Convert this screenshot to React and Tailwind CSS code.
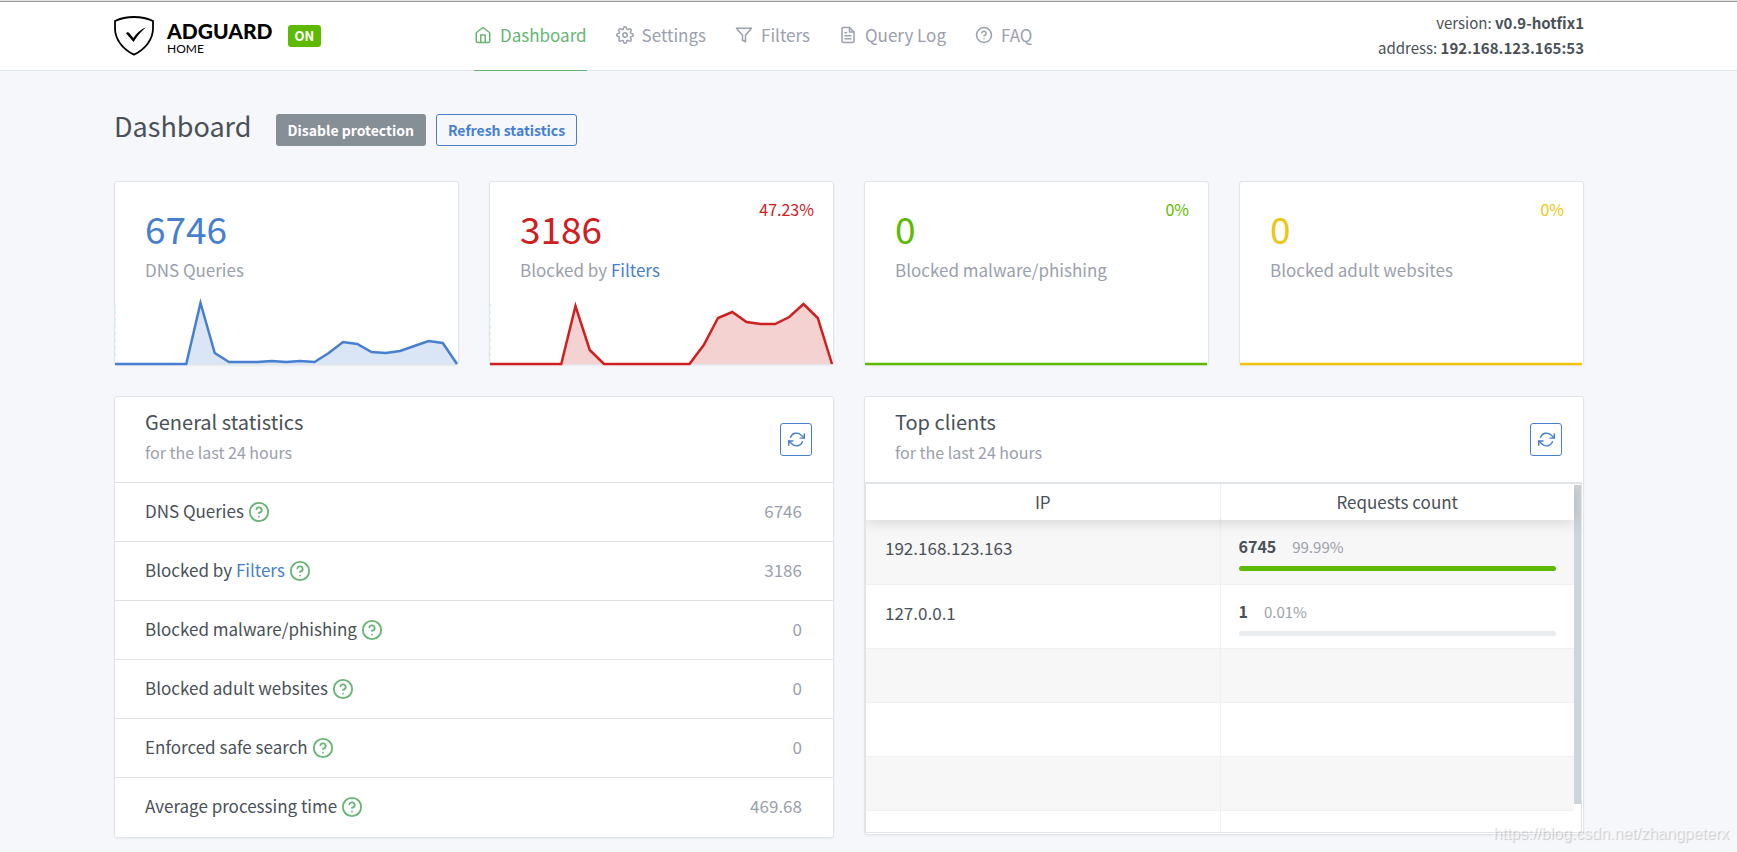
import { FiFileText, FiFilter, FiHelpCircle, FiHome, FiRefreshCw, FiSettings } from 'react-icons/fi';

const NAV_ITEMS = [
  { label: 'Dashboard', icon: FiHome, active: true },
  { label: 'Settings', icon: FiSettings },
  { label: 'Filters', icon: FiFilter },
  { label: 'Query Log', icon: FiFileText },
  { label: 'FAQ', icon: FiHelpCircle },
];

const FLAT = Array(25).fill(0);

const CARDS = [
  {
    value: 6746,
    label: 'DNS Queries',
    text: 'text-[#467fcf]',
    color: '#467fcf',
    guide: true,
    data: [0, 0, 0, 0, 0, 0, 61, 11, 2, 2, 2, 3, 2, 3, 2, 11, 22, 20, 12, 11, 13, 18, 23, 21, 0],
  },
  {
    value: 3186,
    label: 'Blocked by',
    link: 'Filters',
    percent: '47.23%',
    text: 'text-[#cd201f]',
    color: '#cd201f',
    guide: true,
    data: [0, 0, 0, 0, 0, 0, 58, 14, 0, 0, 0, 0, 0, 0, 0, 19, 46, 52, 42, 40, 40, 47, 60, 46, 0],
  },
  {
    value: 0,
    label: 'Blocked malware/phishing',
    percent: '0%',
    text: 'text-[#5eba00]',
    color: '#5eba00',
    data: FLAT,
  },
  {
    value: 0,
    label: 'Blocked adult websites',
    percent: '0%',
    text: 'text-[#f1c40f]',
    color: '#f1c40f',
    data: FLAT,
  },
];

const STATS = [
  { label: 'DNS Queries', value: '6746' },
  { label: 'Blocked by', link: 'Filters', value: '3186' },
  { label: 'Blocked malware/phishing', value: '0' },
  { label: 'Blocked adult websites', value: '0' },
  { label: 'Enforced safe search', value: '0' },
  { label: 'Average processing time', value: '469.68' },
];

const CLIENTS = [
  { ip: '192.168.123.163', count: 6745, percent: 99.99 },
  { ip: '127.0.0.1', count: 1, percent: 0.01 },
];

function Logo() {
  return (
    <a href="#" className="flex items-center gap-[13px] text-black">
      <svg viewBox="0 0 40 40" className="h-10 w-10" fill="none" stroke="currentColor">
        <path
          d="M20 1C13.600 1 6.600 2.300 1 5v7.500C1 22.500 8 33 20 38.600 32 33 39 22.500 39 12.500V5C33.400 2.300 26.400 1 20 1z"
          strokeWidth="1.800"
        />
        <path
          d="M12 17.200c1.200-1.400 2.600-1 3.600.2l3.700 4.600C22.600 17 27 13 32 11.200c-4.600 4-9.300 9.300-12.500 14.800z"
          fill="currentColor"
          stroke="none"
        />
      </svg>
      <span className="flex flex-col pt-1 font-[Lato,sans-serif]">
        <span className="text-[21px] leading-[22px] font-black">ADGUARD</span>
        <span className="text-xs leading-[14px]">HOME</span>
      </span>
    </a>
  );
}

function Header() {
  return (
    <header className="flex h-[70px] items-stretch border-t border-b border-t-[#999] border-b-[#dfe3ea] bg-white pr-[153px] pl-[114px]">
      <div className="flex w-[360px] items-center gap-[15px]">
        <Logo />
        <span className="rounded-[3px] bg-[#5eba00] px-[7px] text-[13px] leading-[22px] font-bold text-white">ON</span>
      </div>
      <nav className="-mb-px flex gap-[29px]">
        {NAV_ITEMS.map(({ label, icon: Icon, active }) => (
          <a
            key={label}
            href="#"
            className={`flex items-center gap-2 border-b pb-[2px] ${
              active ? 'border-[#66b574] text-[#66b574]' : 'border-transparent text-[#9aa0ac]'
            }`}
          >
            <Icon size={18} />
            {label}
          </a>
        ))}
      </nav>
      <div className="ml-auto pt-2 text-right text-[15px] leading-[25px]">
        <p>
          version: <b>v0.9-hotfix1</b>
        </p>
        <p>
          address: <b>192.168.123.165:53</b>
        </p>
      </div>
    </header>
  );
}

function Chart({ data, color, guide }) {
  const points = data.map((v, i) => `${i},${66 - v}`).join(' ');
  return (
    <div className="mt-4 pr-px">
      <svg viewBox="0 0 24 66" preserveAspectRatio="none" className="h-[66px] w-full overflow-visible">
        {guide && (
          <line
            x1="0.035"
            x2="0.035"
            y1="6"
            y2="60"
            stroke="#c8f8f8"
            strokeDasharray="3 4"
            vectorEffect="non-scaling-stroke"
          />
        )}
        <polygon points={`0,66 ${points} 24,66`} fill={color} fillOpacity="0.2" />
        <polyline
          points={points}
          fill="none"
          stroke={color}
          strokeWidth="2.500"
          strokeMiterlimit="10"
          vectorEffect="non-scaling-stroke"
        />
      </svg>
    </div>
  );
}

function CounterCard({ card }) {
  return (
    <section className="rounded-[3px] border border-[#e0e5ec] bg-white shadow-xs">
      <div className="flex items-start justify-between pt-[15px] pr-[19px] pl-[30px]">
        <div>
          <p className={`mt-2 text-[37px] leading-[46px] ${card.text}`}>{card.value}</p>
          <p className="mt-[7px] leading-6 text-[#9aa0ac]">
            {card.label}
            {card.link && (
              <a href="#" className="text-[#467fcf]">
                {' '}
                {card.link}
              </a>
            )}
          </p>
        </div>
        {card.percent && <p className={`text-base leading-6 ${card.text}`}>{card.percent}</p>}
      </div>
      <Chart data={card.data} color={card.color} guide={card.guide} />
    </section>
  );
}

function Panel({ title, children }) {
  return (
    <section className="rounded-[3px] border border-[#e0e5ec] bg-white shadow-xs">
      <div className="flex h-[85px] items-center justify-between pr-[21px] pl-[30px]">
        <div className="self-start pt-[7px]">
          <h2 className="text-xl leading-9">{title}</h2>
          <p className="text-base leading-6 text-[#9aa0ac]">for the last 24 hours</p>
        </div>
        <button
          aria-label={`Refresh ${title}`}
          className="flex h-[33px] w-8 items-center justify-center rounded-[3px] border border-[#467fcf] text-[#467fcf]"
        >
          <FiRefreshCw size={17} />
        </button>
      </div>
      {children}
    </section>
  );
}

function StatsTable() {
  return (
    <table className="w-full">
      <tbody>
        {STATS.map((row) => (
          <tr key={row.label} className="h-[59px] border-t border-[#dee2e6]">
            <td className="pl-[30px]">
              <span className="flex items-center gap-1">
                <span className="pb-[2px]">
                  {row.label}
                  {row.link && (
                    <a href="#" className="text-[#467fcf]">
                      {' '}
                      {row.link}
                    </a>
                  )}
                </span>
                <FiHelpCircle size={22} className="text-[#66b574]" />
              </span>
            </td>
            <td className="pr-[31px] pb-[2px] text-right text-[#9aa0ac]">{row.value}</td>
          </tr>
        ))}
      </tbody>
    </table>
  );
}

function ClientsTable() {
  return (
    <div className="mr-px mb-px flex h-[351px] overflow-hidden border border-t-2 border-[#e0e4e8]">
      <table className="w-full table-fixed self-start">
        <thead className="relative z-10 bg-white shadow-[0_2px_15px_rgba(0,0,0,0.15)]">
          <tr className="h-9">
            <th className="border-r border-[#f0f0f0] font-normal">IP</th>
            <th className="font-normal">Requests count</th>
          </tr>
        </thead>
        <tbody>
          {CLIENTS.map((client) => (
            <tr key={client.ip} className="h-16 border-b border-[#f0f0f0] align-top odd:bg-[#f7f7f7]">
              <td className="border-r border-[#f0f0f0] px-[19px] pt-4 leading-6">{client.ip}</td>
              <td className="px-[18px] pt-[14px] text-base leading-6">
                <b>{client.count}</b>
                <span className="ml-4 text-[15px] text-[#9aa0ac]">{client.percent}%</span>
                <div className="mt-[7px] h-[5px] overflow-hidden rounded-[3px] bg-[#e9ecef]">
                  <div className="h-full bg-[#5eba00]" style={{ width: `${client.percent}%` }} />
                </div>
              </td>
            </tr>
          ))}
          {[0, 1, 2, 3].map((n) => (
            <tr key={n} className="h-[54px] border-b border-[#f0f0f0] odd:bg-[#f7f7f7]">
              <td className="border-r border-[#f0f0f0]" />
              <td />
            </tr>
          ))}
        </tbody>
      </table>
      <div className="mt-px h-[319px] w-[7px] shrink-0 bg-[#ced4da]" />
    </div>
  );
}

export default function App() {
  return (
    <div className="relative min-h-screen border-t border-[#e3e3e3] bg-[#f5f7fb] font-['Noto_Sans_CJK_SC',sans-serif] text-[17px] leading-6 text-[#495057]">
      <Header />
      <main className="pt-[43px] pr-[153px] pb-[14px] pl-[114px]">
        <div className="flex h-8 items-center">
          <h1 className="mr-6 pb-2 text-[27px] leading-8">Dashboard</h1>
          <button className="mr-[10px] h-8 rounded-[3px] bg-[#868e96] px-3 text-sm font-bold text-white">
            Disable protection
          </button>
          <button className="h-8 rounded-[3px] border border-[#467fcf] px-[11px] text-sm font-bold text-[#467fcf]">
            Refresh statistics
          </button>
        </div>
        <div className="mt-[35px] grid grid-cols-4 gap-[30px]">
          {CARDS.map((card) => (
            <CounterCard key={card.label} card={card} />
          ))}
        </div>
        <div className="mt-[31px] grid grid-cols-2 items-start gap-[30px]">
          <Panel title="General statistics">
            <StatsTable />
          </Panel>
          <Panel title="Top clients">
            <ClientsTable />
          </Panel>
        </div>
      </main>
      <p className="absolute right-2 bottom-2 font-['Liberation_Sans',sans-serif] text-base leading-5 text-white/60 [text-shadow:1px_1px_1px_rgba(0,0,0,0.2)]">
        https://blog.csdn.net/zhangpeterx
      </p>
    </div>
  );
}
